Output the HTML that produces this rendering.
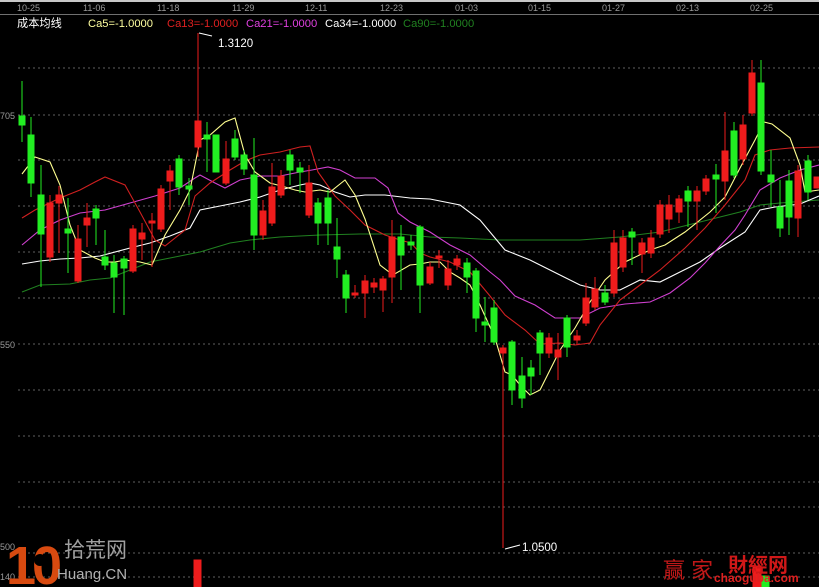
<!DOCTYPE html>
<html><head><meta charset="utf-8"><style>
html,body{margin:0;padding:0;background:#000;width:819px;height:587px;overflow:hidden}
svg{display:block}
text{font-family:"Liberation Sans","Noto Sans CJK SC",sans-serif}
</style></head><body>
<svg width="819" height="587" viewBox="0 0 819 587" xmlns="http://www.w3.org/2000/svg">
<rect width="819" height="587" fill="#000"/>
<rect x="0" y="0" width="819" height="2" fill="#c8c8c8"/>
<line x1="0" y1="14.5" x2="819" y2="14.5" stroke="#707070"/>
<g font-size="9" fill="#9a9a9a">
<text x="17" y="11">10-25</text><text x="83" y="11">11-06</text><text x="157" y="11">11-18</text><text x="232" y="11">11-29</text><text x="305" y="11">12-11</text><text x="380" y="11">12-23</text><text x="455" y="11">01-03</text><text x="528" y="11">01-15</text><text x="602" y="11">01-27</text><text x="676" y="11">02-13</text><text x="750" y="11">02-25</text>
</g>
<g font-size="11.2">
<text x="17" y="27" fill="#fff">成本均线</text>
<text x="88" y="27" fill="#ffffa0">Ca5=-1.0000</text>
<text x="167" y="27" fill="#e02020">Ca13=-1.0000</text>
<text x="246" y="27" fill="#e040e0">Ca21=-1.0000</text>
<text x="325" y="27" fill="#fff">Ca34=-1.0000</text>
<text x="403" y="27" fill="#208020">Ca90=-1.0000</text>
</g>
<g stroke="#606060" stroke-dasharray="2,3" stroke-width="1">
<line x1="18" y1="68" x2="819" y2="68"/><line x1="18" y1="115" x2="819" y2="115"/><line x1="18" y1="160" x2="819" y2="160"/><line x1="18" y1="206" x2="819" y2="206"/><line x1="18" y1="252" x2="819" y2="252"/><line x1="18" y1="298" x2="819" y2="298"/><line x1="18" y1="344" x2="819" y2="344"/><line x1="18" y1="390" x2="819" y2="390"/><line x1="18" y1="436" x2="819" y2="436"/><line x1="18" y1="482" x2="819" y2="482"/><line x1="18" y1="507" x2="819" y2="507"/><line x1="18" y1="553" x2="819" y2="553"/><line x1="18" y1="577" x2="819" y2="577"/>
</g>
<g font-size="9" fill="#9a9a9a"><text x="0" y="119">705</text><text x="0" y="348">550</text><text x="0" y="550">500</text><text x="0" y="580">140</text></g>
<g fill="none" stroke-width="1.1">
<polyline stroke="#208020" points="22,292 40,285 70,284 90,280 110,278 130,270 150,262 180,256 200,252 230,243 250,240 280,237 320,235 360,234 400,234 430,237 460,238 500,240 540,240 580,240 620,237 660,232 700,222 740,212 760,205 780,203 819,200"/>
<polyline stroke="#ffffff" points="22,264 40,261 60,259 80,258 100,256 130,248 150,243 170,236 190,228 200,210 220,206 240,202 260,197 280,190 300,185 310,183 320,185 335,192 350,197 365,195 385,195 410,198 430,199 460,205 480,220 505,250 530,260 560,275 580,285 600,290 620,290 640,280 660,282 680,272 700,262 720,248 745,232 760,210 775,207 800,204 819,196"/>
<polyline stroke="#d040d0" points="22,245 40,230 60,220 80,213 105,210 130,203 155,196 180,188 195,178 200,175 215,183 225,188 240,180 260,176 280,176 300,172 312,170 328,167 340,170 355,178 375,178 388,188 398,213 410,222 430,232 450,245 470,255 490,272 500,280 515,296 535,305 555,318 580,318 600,308 625,304 650,302 670,293 690,278 705,263 720,246 735,230 745,215 760,190 780,178 800,170 819,165"/>
<polyline stroke="#d02020" points="22,218 35,210 60,198 80,190 95,182 105,177 125,185 140,212 155,240 165,246 185,230 195,196 210,183 230,170 245,161 260,155 280,152 300,147 310,146 318,172 335,196 350,210 365,225 385,235 400,240 411,243 420,253 430,257 450,262 470,272 490,296 505,315 525,330 540,344 560,343 575,345 590,343 600,325 620,300 640,285 660,270 685,248 705,228 725,205 745,180 755,155 770,150 790,148 819,147"/>
<polyline stroke="#ffff90" points="22,174 35,157 50,162 60,185 70,225 80,250 95,258 105,262 115,262 125,260 140,262 152,265 165,235 180,210 190,190 200,140 210,135 225,122 235,118 245,155 255,172 270,183 285,187 295,190 305,192 320,190 330,192 345,180 355,195 365,219 380,265 393,275 410,265 420,264 430,262 440,262 450,272 460,278 470,285 480,305 495,338 505,372 512,375 520,385 530,395 540,390 551,368 560,350 575,328 590,302 605,280 625,262 650,250 665,245 685,232 710,212 725,197 740,168 755,140 764,122 772,124 790,138 800,165 805,192 819,190"/>
</g>
<g stroke-width="1">
<g stroke="#22ee22" fill="#22ee22">
<line x1="22" y1="81" x2="22" y2="142"/><rect x="19" y="116" width="6" height="9"/>
<line x1="31" y1="117" x2="31" y2="197"/><rect x="28" y="135" width="6" height="48"/>
<line x1="41" y1="165" x2="41" y2="287"/><rect x="38" y="195" width="6" height="39"/>
<line x1="68" y1="198" x2="68" y2="273"/><rect x="65" y="229" width="6" height="4"/>
<line x1="96" y1="205" x2="96" y2="245"/><rect x="93" y="209" width="6" height="9"/>
<line x1="105" y1="230" x2="105" y2="270"/><rect x="102" y="257" width="6" height="8"/>
<line x1="114" y1="255" x2="114" y2="313"/><rect x="111" y="263" width="6" height="14"/>
<line x1="124" y1="256" x2="124" y2="315"/><rect x="121" y="259" width="6" height="9"/>
<line x1="179" y1="155" x2="179" y2="195"/><rect x="176" y="159" width="6" height="28"/>
<line x1="189" y1="178" x2="189" y2="205"/><rect x="186" y="186" width="6" height="3"/>
<line x1="207" y1="122" x2="207" y2="172"/><rect x="204" y="135" width="6" height="4"/>
<line x1="216" y1="135" x2="216" y2="172"/><rect x="213" y="135" width="6" height="37"/>
<line x1="235" y1="130" x2="235" y2="160"/><rect x="232" y="139" width="6" height="18"/>
<line x1="244" y1="150" x2="244" y2="175"/><rect x="241" y="155" width="6" height="14"/>
<line x1="254" y1="138" x2="254" y2="250"/><rect x="251" y="175" width="6" height="60"/>
<line x1="290" y1="150" x2="290" y2="185"/><rect x="287" y="155" width="6" height="15"/>
<line x1="300" y1="162" x2="300" y2="193"/><rect x="297" y="168" width="6" height="4"/>
<line x1="318" y1="198" x2="318" y2="245"/><rect x="315" y="203" width="6" height="20"/>
<line x1="328" y1="190" x2="328" y2="245"/><rect x="325" y="198" width="6" height="25"/>
<line x1="337" y1="218" x2="337" y2="278"/><rect x="334" y="247" width="6" height="12"/>
<line x1="346" y1="270" x2="346" y2="313"/><rect x="343" y="275" width="6" height="23"/>
<line x1="401" y1="225" x2="401" y2="290"/><rect x="398" y="237" width="6" height="18"/>
<line x1="411" y1="235" x2="411" y2="250"/><rect x="408" y="242" width="6" height="3"/>
<line x1="420" y1="225" x2="420" y2="313"/><rect x="417" y="227" width="6" height="58"/>
<line x1="467" y1="258" x2="467" y2="293"/><rect x="464" y="263" width="6" height="14"/>
<line x1="476" y1="268" x2="476" y2="332"/><rect x="473" y="271" width="6" height="47"/>
<line x1="485" y1="297" x2="485" y2="342"/><rect x="482" y="322" width="6" height="3"/>
<line x1="494" y1="300" x2="494" y2="345"/><rect x="491" y="308" width="6" height="34"/>
<line x1="512" y1="340" x2="512" y2="405"/><rect x="509" y="342" width="6" height="48"/>
<line x1="522" y1="357" x2="522" y2="408"/><rect x="519" y="376" width="6" height="22"/>
<line x1="531" y1="360" x2="531" y2="395"/><rect x="528" y="368" width="6" height="8"/>
<line x1="540" y1="330" x2="540" y2="375"/><rect x="537" y="333" width="6" height="20"/>
<line x1="567" y1="315" x2="567" y2="357"/><rect x="564" y="318" width="6" height="29"/>
<line x1="605" y1="285" x2="605" y2="305"/><rect x="602" y="293" width="6" height="9"/>
<line x1="632" y1="228" x2="632" y2="265"/><rect x="629" y="232" width="6" height="5"/>
<line x1="688" y1="186" x2="688" y2="227"/><rect x="685" y="191" width="6" height="10"/>
<line x1="716" y1="164" x2="716" y2="213"/><rect x="713" y="175" width="6" height="4"/>
<line x1="734" y1="122" x2="734" y2="178"/><rect x="731" y="131" width="6" height="44"/>
<line x1="761" y1="60" x2="761" y2="175"/><rect x="758" y="83" width="6" height="88"/>
<line x1="771" y1="150" x2="771" y2="207"/><rect x="768" y="175" width="6" height="7"/>
<line x1="780" y1="180" x2="780" y2="237"/><rect x="777" y="207" width="6" height="21"/>
<line x1="789" y1="170" x2="789" y2="235"/><rect x="786" y="181" width="6" height="36"/>
<line x1="808" y1="155" x2="808" y2="200"/><rect x="805" y="161" width="6" height="31"/>
<rect x="762" y="576" width="7" height="11"/>
</g>
<g stroke="#ee1c1c" fill="#ee1c1c">
<line x1="50" y1="195" x2="50" y2="262"/><rect x="47" y="203" width="6" height="54"/>
<line x1="59" y1="186" x2="59" y2="253"/><rect x="56" y="195" width="6" height="8"/>
<line x1="78" y1="225" x2="78" y2="283"/><rect x="75" y="239" width="6" height="42"/>
<line x1="87" y1="203" x2="87" y2="247"/><rect x="84" y="218" width="6" height="7"/>
<line x1="133" y1="225" x2="133" y2="273"/><rect x="130" y="229" width="6" height="42"/>
<line x1="142" y1="223" x2="142" y2="260"/><rect x="139" y="233" width="6" height="6"/>
<line x1="152" y1="213" x2="152" y2="267"/><rect x="149" y="221" width="6" height="2"/>
<line x1="161" y1="185" x2="161" y2="232"/><rect x="158" y="189" width="6" height="40"/>
<line x1="170" y1="165" x2="170" y2="210"/><rect x="167" y="171" width="6" height="10"/>
<line x1="198" y1="33" x2="198" y2="157"/><rect x="195" y="121" width="6" height="26"/>
<line x1="226" y1="141" x2="226" y2="185"/><rect x="223" y="159" width="6" height="24"/>
<line x1="263" y1="200" x2="263" y2="240"/><rect x="260" y="211" width="6" height="24"/>
<line x1="272" y1="163" x2="272" y2="226"/><rect x="269" y="187" width="6" height="36"/>
<line x1="281" y1="170" x2="281" y2="198"/><rect x="278" y="176" width="6" height="19"/>
<line x1="309" y1="165" x2="309" y2="218"/><rect x="306" y="183" width="6" height="32"/>
<line x1="355" y1="285" x2="355" y2="298"/><rect x="352" y="293" width="6" height="2"/>
<line x1="365" y1="275" x2="365" y2="318"/><rect x="362" y="281" width="6" height="12"/>
<line x1="374" y1="278" x2="374" y2="293"/><rect x="371" y="283" width="6" height="4"/>
<line x1="383" y1="276" x2="383" y2="312"/><rect x="380" y="279" width="6" height="11"/>
<line x1="392" y1="220" x2="392" y2="303"/><rect x="389" y="237" width="6" height="40"/>
<line x1="430" y1="262" x2="430" y2="285"/><rect x="427" y="267" width="6" height="16"/>
<line x1="439" y1="250" x2="439" y2="268"/><rect x="436" y="256" width="6" height="2"/>
<line x1="448" y1="260" x2="448" y2="290"/><rect x="445" y="269" width="6" height="16"/>
<line x1="457" y1="255" x2="457" y2="270"/><rect x="454" y="259" width="6" height="6"/>
<line x1="503" y1="345" x2="503" y2="548"/><rect x="500" y="348" width="6" height="5"/>
<line x1="549" y1="333" x2="549" y2="358"/><rect x="546" y="338" width="6" height="15"/>
<line x1="558" y1="333" x2="558" y2="380"/><rect x="555" y="350" width="6" height="7"/>
<line x1="577" y1="330" x2="577" y2="345"/><rect x="574" y="336" width="6" height="4"/>
<line x1="586" y1="283" x2="586" y2="326"/><rect x="583" y="298" width="6" height="25"/>
<line x1="595" y1="277" x2="595" y2="310"/><rect x="592" y="289" width="6" height="18"/>
<line x1="614" y1="230" x2="614" y2="297"/><rect x="611" y="243" width="6" height="50"/>
<line x1="623" y1="230" x2="623" y2="272"/><rect x="620" y="238" width="6" height="29"/>
<line x1="642" y1="238" x2="642" y2="273"/><rect x="639" y="243" width="6" height="11"/>
<line x1="651" y1="230" x2="651" y2="258"/><rect x="648" y="238" width="6" height="15"/>
<line x1="660" y1="200" x2="660" y2="238"/><rect x="657" y="205" width="6" height="29"/>
<line x1="669" y1="195" x2="669" y2="233"/><rect x="666" y="205" width="6" height="14"/>
<line x1="679" y1="195" x2="679" y2="223"/><rect x="676" y="199" width="6" height="13"/>
<line x1="697" y1="186" x2="697" y2="230"/><rect x="694" y="191" width="6" height="10"/>
<line x1="706" y1="175" x2="706" y2="195"/><rect x="703" y="179" width="6" height="12"/>
<line x1="725" y1="112" x2="725" y2="200"/><rect x="722" y="151" width="6" height="30"/>
<line x1="743" y1="115" x2="743" y2="165"/><rect x="740" y="125" width="6" height="34"/>
<line x1="752" y1="60" x2="752" y2="116"/><rect x="749" y="73" width="6" height="40"/>
<line x1="798" y1="165" x2="798" y2="237"/><rect x="795" y="171" width="6" height="47"/>
<rect x="814" y="177" width="5" height="11"/>
<rect x="194" y="560" width="7" height="27"/>
<rect x="753" y="566" width="8" height="21"/>
</g>
</g>
<polyline points="199,33 212,36" stroke="#fff" fill="none"/>
<text x="218" y="47" font-size="11.5" fill="#fff">1.3120</text>
<polyline points="505,549 520,545" stroke="#fff" fill="none"/>
<text x="522" y="551" font-size="11.5" fill="#fff">1.0500</text>
<text x="6" y="584" font-size="54" font-weight="bold" fill="#d84a10" letter-spacing="-4">10</text>
<circle cx="40" cy="560" r="6" fill="#000"/>
<text x="64" y="557" font-size="21" fill="#a0a0a0">拾荒网</text>
<text x="57" y="579" font-size="15" fill="#b0b0b0">Huang.CN</text>
<text x="663" y="578" font-size="22" fill="#c01818" font-family="Noto Serif CJK SC,serif">赢 家</text>
<text x="728" y="572" font-size="20" fill="#d01818" font-weight="bold">財經网</text>
<text x="714" y="582" font-size="12" fill="#e02020" font-weight="bold">chaoguba.com</text>
</svg>
</body></html>
